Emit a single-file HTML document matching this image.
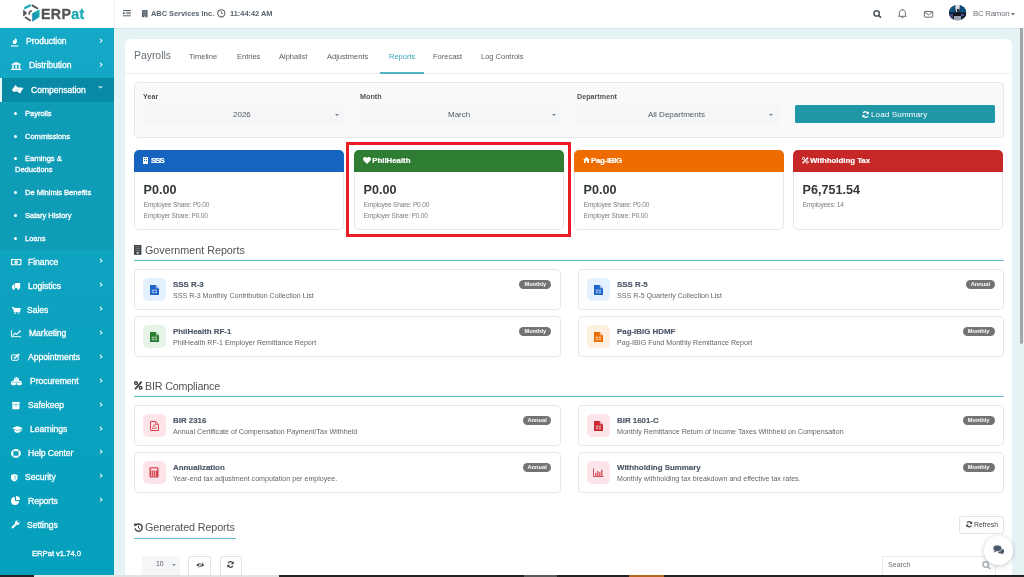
<!DOCTYPE html>
<html><head><meta charset="utf-8">
<style>
*{box-sizing:border-box;margin:0;padding:0}
html,body{width:1024px;height:577px;overflow:hidden;-webkit-font-smoothing:antialiased;font-family:"Liberation Sans",sans-serif;background:#e6f3f5;position:relative}
.a{position:absolute;white-space:nowrap}
svg{position:absolute;overflow:visible}
#hdr{left:0;top:0;width:1024px;height:28px;background:#fff;box-shadow:0 1px 0.5px #d6e6e9}
#side{left:0;top:28px;width:114px;height:549px;background:linear-gradient(#14a9c7 0,#0ea3c0 220px,#05a0bc 549px)}
.si{left:0;width:114px;height:24px;color:#fff;font-size:8.2px;font-weight:bold}
.si .t{position:absolute;top:7px;letter-spacing:0.1px}
.si .ar{position:absolute;left:99px;top:5px;font-size:9px;font-weight:normal}
.sb{color:#fff;font-size:7.3px;font-weight:bold;left:0}
.sb i{position:absolute;left:14px;top:3px;width:3px;height:3px;border-radius:50%;background:#fff}
.hd{color:#58626b;font-size:7.4px;font-weight:bold}
body>*{will-change:transform}
</style></head>
<body>
<div id="hdr" class="a"></div>
<div class="a" style="left:114px;top:0;width:1px;height:28px;background:#eef1f2"></div>
<!-- logo -->
<svg style="left:20px;top:2px" width="22" height="22" viewBox="0 0 22 22"><defs><linearGradient id="lg" x1="1" y1="0" x2="0" y2="1"><stop offset="0" stop-color="#17b5b0"/><stop offset="1" stop-color="#1a88ad"/></linearGradient></defs>
<path d="M5 6 L10 3.5" stroke="#18aeb3" stroke-width="2.3" stroke-linecap="round"/>
<path d="M12.6 3.6 L17.2 6.3" stroke="#505050" stroke-width="1.9" stroke-linecap="round"/>
<path d="M3.6 8.2 L6.6 11.1 L3.6 14 Z" fill="#505050" stroke="#505050" stroke-width="0.8" stroke-linejoin="round"/>
<path d="M9.3 12 C9 10.5 9.6 9.3 11.3 9" stroke="#505050" stroke-width="1.6" fill="none" stroke-linecap="round"/>
<path d="M5.6 15.5 L10 18.2" stroke="#505050" stroke-width="1.9" stroke-linecap="round"/>
<path d="M12.4 11.6 L18.8 7.9 Q19.2 7.7 19.2 8.2 L19.2 15 L12.4 19.3 Z" fill="url(#lg)" stroke="url(#lg)" stroke-width="0.6" stroke-linejoin="round"/>
</svg>
<div class="a" style="left:41px;top:6.6px;font-size:14.2px;line-height:1;font-weight:bold;color:#535353;letter-spacing:0.35px;-webkit-text-stroke:0.3px #535353">ERP<span style="color:#1ba8b3;-webkit-text-stroke:0.3px #1ba8b3">at</span></div>
<!-- header left -->
<svg style="left:123px;top:10px" width="7.9" height="6.3" viewBox="0 0 7.9 6.3"><rect x="0" y="0" width="7.9" height="1" fill="#5b6670"/><rect x="3.1" y="1.8" width="4.8" height="0.8" fill="#5b6670"/><rect x="3.1" y="3.3" width="4.8" height="0.8" fill="#5b6670"/><rect x="0" y="5.3" width="7.9" height="1" fill="#5b6670"/><path d="M0 1.8 L2.6 3.15 L0 4.5Z" fill="#5b6670"/></svg>
<svg style="left:142.4px;top:10px" width="5.6" height="7.3" viewBox="0 0 5.6 7.3"><rect x="0" y="0" width="5.6" height="7.3" rx="0.4" fill="#5b6670"/><rect x="0.9" y="1.2" width="3.8" height="0.5" fill="#fff" opacity="0.45"/><rect x="0.9" y="2.6" width="3.8" height="0.5" fill="#fff" opacity="0.45"/><rect x="0.9" y="4" width="3.8" height="0.5" fill="#fff" opacity="0.45"/><rect x="2.2" y="5.8" width="1.2" height="1.5" fill="#fff" opacity="0.7"/></svg>
<div class="a hd" style="left:151px;top:9px">ABC Services Inc.</div>
<svg style="left:217.3px;top:9.2px" width="8.6" height="8.6" viewBox="0 0 10 10"><circle cx="5" cy="5" r="4.2" stroke="#60666a" stroke-width="1.3" fill="none"/><path d="M5 2.5 V5.3 H6.8" stroke="#60666a" stroke-width="1.1" fill="none"/></svg>
<div class="a hd" style="left:230px;top:9px">11:44:42 AM</div>
<!-- header right -->
<svg style="left:873px;top:10px" width="9" height="8" viewBox="0 0 9 8"><circle cx="3.6" cy="3.4" r="2.7" stroke="#4f565b" stroke-width="1.5" fill="none"/><path d="M5.6 5.4 L8 7.6" stroke="#4f565b" stroke-width="1.7"/></svg>
<svg style="left:898.3px;top:9.2px" width="8.8" height="9" viewBox="0 0 8.8 9"><path d="M0.5 7.3 L1.4 6.2 L1.4 3.9 C1.4 2 2.7 0.9 4.4 0.9 C6.1 0.9 7.4 2 7.4 3.9 L7.4 6.2 L8.3 7.3 Z" stroke="#5a6064" stroke-width="0.9" fill="none" stroke-linejoin="round"/><path d="M3.4 7.9 C3.6 9 5.2 9 5.4 7.9" stroke="#5a6064" stroke-width="0.9" fill="none"/><path d="M4.4 0 V0.9" stroke="#5a6064" stroke-width="0.9"/></svg>
<svg style="left:923.8px;top:10.6px" width="9.2" height="6.6" viewBox="0 0 9.2 6.6"><rect x="0.45" y="0.45" width="8.3" height="5.7" rx="0.6" stroke="#5a6064" stroke-width="0.9" fill="none"/><path d="M0.8 1 L4.6 3.9 L8.4 1" stroke="#5a6064" stroke-width="0.9" fill="none"/></svg>
<svg style="left:949.2px;top:5.3px" width="17.3" height="15.5" viewBox="0 0 17.3 15.5"><defs><clipPath id="cc"><ellipse cx="8.65" cy="7.75" rx="8.65" ry="7.75"/></clipPath><filter id="bl" x="-20%" y="-20%" width="140%" height="140%"><feGaussianBlur stdDeviation="0.7"/></filter></defs><g clip-path="url(#cc)"><rect width="17.3" height="15.5" fill="#123a5c"/><g filter="url(#bl)"><rect x="0" y="0" width="6" height="8" fill="#0f5580"/><rect x="11" y="0" width="6.3" height="8" fill="#0e4f78"/><path d="M6 0 H11 L10 7 H7Z" fill="#d9dde2"/><rect x="8" y="4" width="2" height="3" fill="#2a2f3a"/><rect x="0" y="7.5" width="17.3" height="5" fill="#15171c"/><rect x="5" y="11" width="7" height="4.5" fill="#9aa2b0"/><rect x="1" y="9" width="3" height="3" fill="#3b4a8a"/><rect x="12" y="9" width="3" height="2" fill="#4a56a0"/><rect x="0" y="12.5" width="5" height="3" fill="#3a3f4a"/></g></g></svg>
<div class="a" style="left:972.8px;top:10px;font-size:7.8px;line-height:1;letter-spacing:-0.22px;color:#69727a">BC Ramon</div>
<svg style="left:1011.4px;top:13px" width="4" height="2.4" viewBox="0 0 5 3"><path d="M0 0 H5 L2.5 3 Z" fill="#6f7478"/></svg>
<div id="side" class="a"></div>
<div class="a" style="left:0;top:78px;width:114px;height:23.7px;background:#0889a6"></div>
<div class="a" style="left:0;top:78px;width:1.5px;height:24px;background:#e9f6f8"></div>
<div class="a" style="left:0;top:102px;width:114px;height:148px;background:#0f9cb7"></div>
<style>
.mi{position:absolute;color:#fff;font-size:8.6px;font-weight:normal;-webkit-text-stroke:0.3px #fff;line-height:10px;letter-spacing:-0.05px;white-space:nowrap;transform:translateY(0px)}
.ar{position:absolute;left:99.1px;width:3px;height:3px;border-right:1.1px solid #fff;border-top:1.1px solid #fff;transform:translateY(0.2px) rotate(45deg)}
.sm{position:absolute;color:#fff;font-size:7.6px;font-weight:normal;-webkit-text-stroke:0.3px #fff;line-height:10px;letter-spacing:-0.05px;white-space:nowrap;transform:translateY(0.8px)}
.dot{position:absolute;left:14px;width:3px;height:3px;border-radius:50%;background:#fff}
</style>
<!-- main items: top = center-5 -->
<div class="mi" style="left:26px;top:36px">Production</div><div class="ar" style="top:39px"></div>
<div class="mi" style="left:29px;top:60px">Distribution</div><div class="ar" style="top:63px"></div>
<div class="mi" style="left:31px;top:84.5px">Compensation</div><div class="ar" style="top:85px;left:99.2px;transform:rotate(135deg)"></div>
<div class="dot" style="top:111.5px"></div><div class="sm" style="left:25px;top:107.5px">Payrolls</div>
<div class="dot" style="top:134.5px"></div><div class="sm" style="left:24.5px;top:130.5px">Commissions</div>
<div class="dot" style="top:157px"></div><div class="sm" style="left:24.5px;top:153px">Earnings &amp;</div>
<div class="sm" style="left:14.5px;top:164px">Deductions</div>
<div class="dot" style="top:191px"></div><div class="sm" style="left:24.5px;top:187px">De Minimis Benefits</div>
<div class="dot" style="top:214px"></div><div class="sm" style="left:24.5px;top:210px">Salary History</div>
<div class="dot" style="top:237px"></div><div class="sm" style="left:24.5px;top:233px">Loans</div>
<div class="mi" style="left:28px;top:257px">Finance</div><div class="ar" style="top:259px"></div>
<div class="mi" style="left:28px;top:280.5px">Logistics</div><div class="ar" style="top:283px"></div>
<div class="mi" style="left:27px;top:304.5px">Sales</div><div class="ar" style="top:307px"></div>
<div class="mi" style="left:29px;top:328px">Marketing</div><div class="ar" style="top:331px"></div>
<div class="mi" style="left:28px;top:352px">Appointments</div><div class="ar" style="top:355px"></div>
<div class="mi" style="left:30px;top:376px">Procurement</div><div class="ar" style="top:379px"></div>
<div class="mi" style="left:28px;top:400px">Safekeep</div><div class="ar" style="top:403px"></div>
<div class="mi" style="left:30px;top:424px">Learnings</div><div class="ar" style="top:427px"></div>
<div class="mi" style="left:27.5px;top:447.5px">Help Center</div><div class="ar" style="top:450px"></div>
<div class="mi" style="left:25px;top:471.5px">Security</div><div class="ar" style="top:474px"></div>
<div class="mi" style="left:27.5px;top:495.5px">Reports</div><div class="ar" style="top:498px"></div>
<div class="mi" style="left:27px;top:519.5px">Settings</div>
<div class="mi" style="left:32px;top:549px;font-size:7.7px">ERPat v1.74.0</div>
<!-- sidebar icons -->
<svg style="left:10.8px;top:37.6px" width="7.5" height="8.5" viewBox="0 0 7.5 8.5"><path d="M4.6 0 C6.6 1.8 6.4 4.2 4.6 6 L2.4 6 C1.4 4.5 1.6 2.6 3 1.6 C3 2.6 3.4 3 3.8 3.2 C3.6 2 3.8 1 4.6 0Z" fill="#fff"/><rect x="0" y="7.4" width="7.3" height="1.1" fill="#fff"/></svg>
<svg style="left:10.8px;top:62px" width="10.4" height="8" viewBox="0 0 10.4 8"><path d="M0 2.2 L5.2 0 L10.4 2.2 Z" fill="#fff"/><rect x="0.6" y="2.2" width="9.2" height="0.8" fill="#fff"/><rect x="1.2" y="3.3" width="1.6" height="3.3" fill="#fff"/><rect x="4.4" y="3.3" width="1.6" height="3.3" fill="#fff"/><rect x="7.6" y="3.3" width="1.6" height="3.3" fill="#fff"/><rect x="0" y="6.8" width="10.4" height="1.2" fill="#fff"/></svg>
<svg style="left:12px;top:85px" width="11.4" height="8.6" viewBox="0 0 11.4 8.6"><path d="M0.2 5 L3.5 0.2 L5.6 2.5 L11.2 3.1 L7.9 8.4 L5.5 6.2 L1.3 6.6 Z" fill="#fff" stroke="#fff" stroke-width="0.4" stroke-linejoin="round"/><path d="M3.6 4.6 H7.2" stroke="#0a8aa5" stroke-width="0.5" opacity="0.6"/></svg>
<svg style="left:10.7px;top:259.4px" width="10.4" height="6.2" viewBox="0 0 10.4 6.2"><rect x="0" y="0" width="10.4" height="6.2" fill="#fff"/><rect x="1.1" y="1" width="8.2" height="4.2" rx="1.2" fill="#0aa0bc"/><circle cx="5.2" cy="3.1" r="1.9" fill="#fff"/><circle cx="5.2" cy="3.1" r="0.7" fill="#0aa0bc"/></svg>
<svg style="left:11.9px;top:283px" width="8.2" height="6.8" viewBox="0 0 8.2 6.8"><rect x="2.8" y="0" width="5.4" height="5" rx="0.5" fill="#fff"/><path d="M2.4 1.6 H1.2 L0 3.2 V5 H2.4Z" fill="#fff"/><circle cx="1.7" cy="5.6" r="1.2" fill="#fff"/><circle cx="6.3" cy="5.6" r="1.2" fill="#fff"/></svg>
<svg style="left:11.5px;top:307px" width="8.5" height="7" viewBox="0 0 8.5 7"><path d="M0 0.6 H1.6 L2.4 4.6 H7.4 L8.2 1.6 H2" stroke="#fff" stroke-width="1.2" fill="#fff" stroke-linejoin="round"/><circle cx="3" cy="6.2" r="0.8" fill="#fff"/><circle cx="6.8" cy="6.2" r="0.8" fill="#fff"/></svg>
<svg style="left:11px;top:330.3px" width="10.1" height="7.1" viewBox="0 0 10.1 7.1"><path d="M0.45 0 V6.65 H10.1" stroke="#fff" stroke-width="0.9" fill="none"/><path d="M1.6 5.6 L4 3.2 L5.8 4.4 L9.2 1" stroke="#fff" stroke-width="1.1" fill="none"/><path d="M7.6 0.6 H9.6 V2.6Z" fill="#fff"/></svg>
<svg style="left:11px;top:354px" width="9" height="6.8" viewBox="0 0 9 6.8"><rect x="0.5" y="0.9" width="6.6" height="5.4" rx="1" stroke="#fff" stroke-width="1" fill="none"/><path d="M3.2 4.4 L8.4 0" stroke="#fff" stroke-width="1.5"/><path d="M2.8 3.6 L2.6 4.8 L3.8 4.6Z" fill="#fff"/></svg>
<svg style="left:11px;top:377px" width="10.9" height="8.6" viewBox="0 0 10.9 8.6"><path d="M5.45 0 L8 1.2 V4 L5.45 5.2 L2.9 4 V1.2Z" fill="#fff"/><path d="M2.6 3.4 L5.2 4.6 V7.4 L2.6 8.6 L0 7.4 V4.6Z" fill="#fff"/><path d="M8.3 3.4 L10.9 4.6 V7.4 L8.3 8.6 L5.7 7.4 V4.6Z" fill="#fff"/><path d="M2.9 1.2 L5.45 2.4 L8 1.2 M0 4.6 L2.6 5.8 L5.2 4.6 M5.7 4.6 L8.3 5.8 L10.9 4.6" stroke="#0aa0bc" stroke-width="0.5" fill="none"/></svg>
<svg style="left:11.9px;top:402px" width="7.8" height="7.3" viewBox="0 0 7.8 7.3"><rect x="0" y="0" width="7.8" height="1.8" fill="#fff"/><rect x="0.4" y="2.3" width="7" height="5" fill="#fff"/><rect x="3" y="3.1" width="1.8" height="0.7" fill="#0aa0bc"/></svg>
<svg style="left:11.5px;top:426.1px" width="10.9" height="7" viewBox="0 0 10.9 7"><path d="M0 2.3 L5.45 0 L10.9 2.3 L5.45 4.6 Z" fill="#fff"/><path d="M2.3 3.6 V5.6 C3.8 7.3 7.1 7.3 8.6 5.6 V3.6 L5.45 4.9Z" fill="#fff"/><path d="M9.6 2.8 V5.5" stroke="#fff" stroke-width="0.6"/></svg>
<svg style="left:10.6px;top:449px" width="9.9" height="8.8" viewBox="0 0 9.9 8.8"><ellipse cx="4.95" cy="4.4" rx="3.8" ry="3.4" stroke="#fff" stroke-width="2.2" fill="none"/><path d="M1.8 1.4 L3.4 2.8 M8.1 1.4 L6.5 2.8 M1.8 7.4 L3.4 6 M8.1 7.4 L6.5 6" stroke="#0aa0bc" stroke-width="0.8"/></svg>
<svg style="left:11.3px;top:473.6px" width="6.6" height="7.6" viewBox="0 0 6.6 7.6"><path d="M0 0.9 L3.3 0 L6.6 0.9 V3.8 C6.6 5.8 5 7 3.3 7.6 C1.6 7 0 5.8 0 3.8Z" fill="#fff"/><path d="M3.3 1.2 V6.4 C4.4 6 5.4 5 5.4 3.8 V1.8Z" fill="#0aa0bc" opacity="0.35"/></svg>
<svg style="left:11px;top:496px" width="9" height="9" viewBox="0 0 9 9"><path d="M4 1 A4 4 0 1 0 8 5 H4Z" fill="#fff"/><path d="M5 0 A4 4 0 0 1 9 4 H5Z" fill="#fff"/></svg>
<svg style="left:10.5px;top:520px" width="9" height="9" viewBox="0 0 9 9"><path d="M1 8 L5 4" stroke="#fff" stroke-width="2"/><circle cx="6.3" cy="2.7" r="2.3" fill="#fff"/><circle cx="7.2" cy="1.8" r="1" fill="#0aa0bc"/></svg>
<style>
.tab{position:absolute;top:52px;font-size:7.5px;color:#5b6166;white-space:nowrap}
.lbl{position:absolute;top:93.3px;font-size:7.2px;line-height:1;font-weight:bold;color:#505458;white-space:nowrap}
.sel{position:absolute;top:105px;height:19.5px;background:#f5f6f8}
.stx{position:absolute;top:111.1px;font-size:8px;line-height:1;color:#55595d;white-space:nowrap}
.car{position:absolute;top:114px;width:0;height:0;border-left:2px solid transparent;border-right:2px solid transparent;border-top:2.5px solid #7a7f83}
.sel span{position:absolute;top:5.5px;font-size:7.6px;color:#55595d;white-space:nowrap}
.sel i{position:absolute;top:9px;width:0;height:0;border-left:2px solid transparent;border-right:2px solid transparent;border-top:2.5px solid #8a8f93}
.kc{position:absolute;top:149.5px;width:210px;height:80px;background:#fff;border:1px solid #e6e7e8;border-radius:5px}
.kh{position:absolute;left:-1px;top:-1px;right:-1px;height:22.2px;color:#fff;font-size:7.8px;font-weight:bold;border-radius:5px 5px 0 0}
.kh span{position:absolute;left:17px;top:7.3px;line-height:1;letter-spacing:0;white-space:nowrap;-webkit-text-stroke:0.2px #fff}
.kv{position:absolute;left:8.5px;top:32.8px;font-size:12.6px;line-height:1;font-weight:bold;color:#33373a;white-space:nowrap}
.ks{position:absolute;left:8.7px;font-size:6.6px;line-height:1;letter-spacing:-0.2px;color:#7b8085;white-space:nowrap}
</style>
<div class="a" id="card" style="left:125.3px;top:39.2px;width:887.3px;height:560px;background:#fff;border-radius:6px"></div>
<!-- tabs -->
<div class="a" style="left:133.6px;top:50.9px;font-size:10.4px;line-height:1;color:#66707a">Payrolls</div>
<div class="tab" style="left:189px">Timeline</div>
<div class="tab" style="left:237px">Entries</div>
<div class="tab" style="left:279px">Alphalist</div>
<div class="tab" style="left:327px">Adjustments</div>
<div class="tab" style="left:388.5px;color:#3aa7b6">Reports</div>
<div class="tab" style="left:433px">Forecast</div>
<div class="tab" style="left:480.5px">Log Controls</div>
<div class="a" style="left:125.3px;top:73.3px;width:887.3px;height:1px;background:#eceeef"></div>
<div class="a" style="left:379.8px;top:71.7px;width:43.7px;height:1.7px;background:#52b2c0"></div>
<!-- filter panel -->
<div class="a" style="left:133.5px;top:82px;width:870px;height:55.5px;background:#f9f9f9;border:1px solid #e6e7e8;border-radius:4px"></div>
<div class="lbl" style="left:143px">Year</div>
<div class="lbl" style="left:360px">Month</div>
<div class="lbl" style="left:577px">Department</div>
<div class="sel" style="left:142.5px;width:201.5px"></div><div class="sel" style="left:360px;width:200.5px"></div><div class="sel" style="left:577px;width:202px"></div>
<div class="stx" id="s1" style="left:232.8px">2026</div><div class="stx" id="s2" style="left:447.9px">March</div><div class="stx" id="s3" style="left:648px">All Departments</div>
<i class="car" style="left:335px"></i><i class="car" style="left:552px"></i><i class="car" style="left:769px"></i>
<div class="a" style="left:795px;top:105px;width:200px;height:18px;background:#1f97a7;border-radius:1.5px"></div>
<svg style="left:862px;top:110.8px" width="7.2" height="7.2" viewBox="0 0 10 10"><path d="M8.5 4 A3.7 3.7 0 0 0 1.6 3" stroke="#fff" stroke-width="1.8" fill="none"/><path d="M9.5 0.5 V4.5 H5.5Z" fill="#fff"/><path d="M1.5 6 A3.7 3.7 0 0 0 8.4 7" stroke="#fff" stroke-width="1.8" fill="none"/><path d="M0.5 9.5 V5.5 H4.5Z" fill="#fff"/></svg>
<div class="a" style="left:871px;top:110.6px;font-size:8.1px;line-height:1;letter-spacing:0.12px;color:#fff">Load Summary</div>
<!-- KPI cards -->
<div class="kc" style="left:134px"><div class="kh" style="background:#1565c0"><span style="letter-spacing:-1px">SSS</span></div><div class="kv">P0.00</div><div class="ks" style="top:51.3px">Employee Share: P0.00</div><div class="ks" style="top:61.5px">Employer Share: P0.00</div></div>
<div class="kc" style="left:354px"><div class="kh" style="background:#2e7d32"><span style="left:18.3px">PhilHealth</span></div><div class="kv">P0.00</div><div class="ks" style="top:51.3px">Employee Share: P0.00</div><div class="ks" style="top:61.5px">Employer Share: P0.00</div></div>
<div class="kc" style="left:574px"><div class="kh" style="background:#ef6c00"><span style="letter-spacing:-0.25px">Pag-IBIG</span></div><div class="kv">P0.00</div><div class="ks" style="top:51.3px">Employee Share: P0.00</div><div class="ks" style="top:61.5px">Employer Share: P0.00</div></div>
<div class="kc" style="left:793px"><div class="kh" style="background:#c62828"><span>Withholding Tax</span></div><div class="kv">P6,751.54</div><div class="ks" style="top:51.3px">Employees: 14</div></div>
<!-- card header icons -->
<svg style="left:143px;top:156.5px" width="5" height="7" viewBox="0 0 5 7"><rect width="5" height="7" fill="#fff"/><rect x="1" y="1" width="1" height="1" fill="#1565c0"/><rect x="3" y="1" width="1" height="1" fill="#1565c0"/><rect x="1" y="3" width="1" height="1" fill="#1565c0"/><rect x="3" y="3" width="1" height="1" fill="#1565c0"/></svg>
<svg style="left:362.5px;top:157px" width="8" height="7" viewBox="0 0 8 7"><path d="M4 7 L0.6 3.5 C-0.6 2 0.4 0 2 0 C3 0 3.6 0.6 4 1.2 C4.4 0.6 5 0 6 0 C7.6 0 8.6 2 7.4 3.5Z" fill="#fff"/></svg>
<svg style="left:582.5px;top:157px" width="7" height="6" viewBox="0 0 7 6"><path d="M0 3 L3.5 0 L7 3 H6 V6 H4.3 V4 H2.7 V6 H1 V3Z" fill="#fff"/></svg>
<svg style="left:802.2px;top:157.3px" width="6.8" height="6.6" viewBox="0 0 6.8 6.6"><circle cx="1.5" cy="1.5" r="1.1" stroke="#fff" stroke-width="1" fill="none"/><circle cx="5.3" cy="5.1" r="1.1" stroke="#fff" stroke-width="1" fill="none"/><path d="M6.2 0.4 L0.6 6.2" stroke="#fff" stroke-width="1.4"/></svg>
<!-- red highlight -->
<div class="a" style="left:345.5px;top:142px;width:225px;height:95.4px;border:3.5px solid #ec1c24"></div>
<style>
.sec{position:absolute;font-size:10.75px;line-height:1;color:#505458;white-space:nowrap}
.it{position:absolute;width:426.5px;height:41.3px;background:#fff;border:1px solid #e6e7e8;border-radius:4px}
.ib{position:absolute;left:8.3px;top:8.4px;width:22.5px;height:22.6px;border-radius:5px}
.itt{position:absolute;left:38px;top:10.6px;font-size:7.9px;line-height:1;font-weight:bold;color:#4b5767;-webkit-text-stroke:0.15px #4b5767;white-space:nowrap}
.itd{position:absolute;left:38px;top:23px;font-size:7.1px;line-height:1;color:#62676b;white-space:nowrap}
.bd{position:absolute;top:9.8px;height:9.2px;border-radius:5px;background:#737373;color:#fff;font-size:5.7px;font-weight:bold;line-height:9.2px;text-align:center}
</style>
<div class="it" style="left:133.8px;top:269.1px;width:426.5px"><div class="ib" style="background:#e3f0fd"><svg style="left:6.7px;top:6.4px" width="9" height="10" viewBox="0 0 9 10"><path d="M0 0 H5.8 L9 3.2 V10 H0Z" fill="#1e64c8"/><path d="M5.8 0 V3.2 H9" fill="#fff" opacity="0.55"/><rect x="1.8" y="4.6" width="5.2" height="3.6" fill="#fff" opacity="0.55"/><rect x="1.8" y="6.1" width="5.2" height="0.6" fill="#1e64c8"/><rect x="4" y="4.6" width="0.6" height="3.6" fill="#1e64c8"/></svg></div><div class="itt">SSS R-3</div><div class="itd">SSS R-3 Monthly Contribution Collection List</div><div class="bd" style="left:384.3px;width:32.0px">Monthly</div></div>
<div class="it" style="left:577.5px;top:269.1px;width:425.8px"><div class="ib" style="background:#e3f0fd"><svg style="left:6.7px;top:6.4px" width="9" height="10" viewBox="0 0 9 10"><path d="M0 0 H5.8 L9 3.2 V10 H0Z" fill="#1e64c8"/><path d="M5.8 0 V3.2 H9" fill="#fff" opacity="0.55"/><rect x="1.8" y="4.6" width="5.2" height="3.6" fill="#fff" opacity="0.55"/><rect x="1.8" y="6.1" width="5.2" height="0.6" fill="#1e64c8"/><rect x="4" y="4.6" width="0.6" height="3.6" fill="#1e64c8"/></svg></div><div class="itt">SSS R-5</div><div class="itd">SSS R-5 Quarterly Collection List</div><div class="bd" style="left:387.1px;width:28.6px">Annual</div></div>
<div class="it" style="left:133.8px;top:316.4px;width:426.5px"><div class="ib" style="background:#e6f4e7"><svg style="left:6.7px;top:6.4px" width="9" height="10" viewBox="0 0 9 10"><path d="M0 0 H5.8 L9 3.2 V10 H0Z" fill="#2a7d31"/><path d="M5.8 0 V3.2 H9" fill="#fff" opacity="0.55"/><rect x="1.8" y="4.6" width="5.2" height="3.6" fill="#fff" opacity="0.55"/><rect x="1.8" y="6.1" width="5.2" height="0.6" fill="#2a7d31"/><rect x="4" y="4.6" width="0.6" height="3.6" fill="#2a7d31"/></svg></div><div class="itt">PhilHealth RF-1</div><div class="itd">PhilHealth RF-1 Employer Remittance Report</div><div class="bd" style="left:384.3px;width:32.0px">Monthly</div></div>
<div class="it" style="left:577.5px;top:316.4px;width:425.8px"><div class="ib" style="background:#fdf0e0"><svg style="left:6.7px;top:6.4px" width="9" height="10" viewBox="0 0 9 10"><path d="M0 0 H5.8 L9 3.2 V10 H0Z" fill="#ef6c00"/><path d="M5.8 0 V3.2 H9" fill="#fff" opacity="0.55"/><rect x="1.8" y="4.6" width="5.2" height="3.6" fill="#fff" opacity="0.55"/><rect x="1.8" y="6.1" width="5.2" height="0.6" fill="#ef6c00"/><rect x="4" y="4.6" width="0.6" height="3.6" fill="#ef6c00"/></svg></div><div class="itt">Pag-IBIG HDMF</div><div class="itd">Pag-IBIG Fund Monthly Remittance Report</div><div class="bd" style="left:383.6px;width:32.0px">Monthly</div></div>
<div class="it" style="left:133.8px;top:405.1px;width:426.5px"><div class="ib" style="background:#fde4e8"><svg style="left:6.7px;top:6.4px" width="9" height="10" viewBox="0 0 9 10"><path d="M0.5 0.5 H5.6 L8.5 3.4 V9.5 H0.5Z" fill="none" stroke="#d9464f" stroke-width="1"/><path d="M5.4 0.6 V3.6 H8.4" fill="none" stroke="#d9464f" stroke-width="0.8"/><path d="M2.2 8 C3.2 6 4 4.4 4 3.6 C4.2 4.8 5 6.2 6.6 7.2 C5.2 7 3.6 7.4 2.2 8Z" fill="none" stroke="#d9464f" stroke-width="0.7"/></svg></div><div class="itt">BIR 2316</div><div class="itd">Annual Certificate of Compensation Payment/Tax Withheld</div><div class="bd" style="left:387.8px;width:28.6px">Annual</div></div>
<div class="it" style="left:577.5px;top:405.1px;width:425.8px"><div class="ib" style="background:#fde4e8"><svg style="left:6.7px;top:6.4px" width="9" height="10" viewBox="0 0 9 10"><path d="M0 0 H5.8 L9 3.2 V10 H0Z" fill="#c8282f"/><path d="M5.8 0 V3.2 H9" fill="#fff" opacity="0.55"/><rect x="1.8" y="4.6" width="5.2" height="3.6" fill="#fff" opacity="0.55"/><rect x="1.8" y="6.1" width="5.2" height="0.6" fill="#c8282f"/><rect x="4" y="4.6" width="0.6" height="3.6" fill="#c8282f"/></svg></div><div class="itt">BIR 1601-C</div><div class="itd">Monthly Remittance Return of Income Taxes Withheld on Compensation</div><div class="bd" style="left:383.6px;width:32.0px">Monthly</div></div>
<div class="it" style="left:133.8px;top:452.2px;width:426.5px"><div class="ib" style="background:#fde4e8"><svg style="left:6px;top:6px" width="10" height="10.5" viewBox="0 0 10 10.5"><rect x="0.5" y="0.2" width="9" height="10.2" rx="1" fill="#d23f4a"/><rect x="1.7" y="1.4" width="6.6" height="2.2" fill="#fde4e8"/><rect x="1.9" y="4.4" width="1.2" height="1.2" fill="#fde4e8"/><rect x="1.9" y="6.300000000000001" width="1.2" height="1.2" fill="#fde4e8"/><rect x="1.9" y="8.2" width="1.2" height="1.2" fill="#fde4e8"/><rect x="3.9" y="4.4" width="1.2" height="1.2" fill="#fde4e8"/><rect x="3.9" y="6.300000000000001" width="1.2" height="1.2" fill="#fde4e8"/><rect x="3.9" y="8.2" width="1.2" height="1.2" fill="#fde4e8"/><rect x="5.9" y="4.4" width="1.2" height="1.2" fill="#fde4e8"/><rect x="5.9" y="6.300000000000001" width="1.2" height="1.2" fill="#fde4e8"/><rect x="5.9" y="8.2" width="1.2" height="1.2" fill="#fde4e8"/></svg></div><div class="itt">Annualization</div><div class="itd">Year-end tax adjustment computation per employee.</div><div class="bd" style="left:387.8px;width:28.6px">Annual</div></div>
<div class="it" style="left:577.5px;top:452.2px;width:425.8px"><div class="ib" style="background:#fde4e8"><svg style="left:6px;top:7px" width="11" height="9" viewBox="0 0 11 9"><path d="M0.5 0.5 V8.5 H10.5" stroke="#d23f4a" stroke-width="0.9" fill="none"/><rect x="2.2" y="5" width="1.2" height="3" fill="#d23f4a"/><rect x="4.2" y="3" width="1.2" height="5" fill="#d23f4a"/><rect x="6.2" y="4.2" width="1.2" height="3.8" fill="#d23f4a"/><rect x="8.2" y="1.8" width="1.2" height="6.2" fill="#d23f4a"/></svg></div><div class="itt">Withholding Summary</div><div class="itd">Monthly withholding tax breakdown and effective tax rates.</div><div class="bd" style="left:383.6px;width:32.0px">Monthly</div></div>
<!-- Government Reports -->
<svg style="left:134px;top:245.2px" width="7.4" height="9.8" viewBox="0 0 7.4 9.8"><rect width="7.4" height="9.8" fill="#3d4246"/><rect x="1.3" y="1.3" width="4.8" height="1" fill="#7a7f83"/><rect x="1.3" y="3.2" width="4.8" height="1" fill="#7a7f83"/><rect x="1.3" y="5.1" width="4.8" height="1" fill="#7a7f83"/><rect x="2.4" y="7.3" width="2.6" height="1.3" rx="0.6" fill="#fff"/></svg>
<div class="sec" style="left:145.3px;top:244.9px">Government Reports</div>
<div class="a" style="left:133.8px;top:259.9px;width:870px;height:1.1px;background:#62bcc8"></div>
<!-- BIR Compliance -->
<svg style="left:133.7px;top:381.3px" width="8.6" height="8.8" viewBox="0 0 8.6 8.8"><circle cx="2" cy="2.1" r="1.4" stroke="#35393c" stroke-width="1.3" fill="none"/><circle cx="6.6" cy="6.7" r="1.4" stroke="#35393c" stroke-width="1.3" fill="none"/><path d="M7.6 0.6 L1 8.2" stroke="#35393c" stroke-width="1.7"/></svg>
<div class="sec" style="left:145.4px;top:381px;letter-spacing:-0.19px">BIR Compliance</div>
<div class="a" style="left:133.8px;top:395.5px;width:870px;height:1.1px;background:#62bcc8"></div>
<!-- Generated Reports -->
<svg style="left:133.5px;top:522.5px" width="9" height="9" viewBox="0 0 10 10"><path d="M2 2.5 A4 4 0 1 1 1.2 6" stroke="#3a3f43" stroke-width="1.6" fill="none"/><path d="M0 0.5 L4 0.8 L0.6 4.2Z" fill="#3a3f43"/><path d="M5 3 V5.3 L6.5 6.5" stroke="#3a3f43" stroke-width="1.1" fill="none"/></svg>
<div class="sec" style="left:145.3px;top:522.2px;letter-spacing:-0.1px">Generated Reports</div>
<div class="a" style="left:133.6px;top:537.9px;width:101.6px;height:1.1px;background:#62bcc8"></div>
<div class="a" style="left:959px;top:516px;width:44.5px;height:17.5px;border:1px solid #e2e5e7;border-radius:2px;background:#fff"></div>
<svg style="left:965.5px;top:521px" width="6.5" height="6.5" viewBox="0 0 10 10"><path d="M8.5 4 A3.7 3.7 0 0 0 1.6 3" stroke="#3f4448" stroke-width="1.8" fill="none"/><path d="M9.5 0.5 V4.5 H5.5Z" fill="#3f4448"/><path d="M1.5 6 A3.7 3.7 0 0 0 8.4 7" stroke="#3f4448" stroke-width="1.8" fill="none"/><path d="M0.5 9.5 V5.5 H4.5Z" fill="#3f4448"/></svg>
<div class="a" style="left:973.5px;top:520.5px;font-size:6.9px;color:#3f4448">Refresh</div>
<!-- controls -->
<div class="a" style="left:142.3px;top:555.6px;width:37.5px;height:22px;background:#f5f6f8"></div>
<div class="a" style="left:155.5px;top:560px;font-size:6.8px;color:#55595d">10</div>
<div class="a" style="left:172px;top:564px;width:0;height:0;border-left:2px solid transparent;border-right:2px solid transparent;border-top:2.5px solid #8a8f93"></div>
<div class="a" style="left:188px;top:555.5px;width:23px;height:22px;border:1px solid #e2e5e7;border-radius:2px"></div>
<svg style="left:195.6px;top:562.2px" width="8.6" height="6" viewBox="0 0 8.6 6"><path d="M0.4 3 C1.8 0.6 6.8 0.6 8.2 3 C6.8 5.4 1.8 5.4 0.4 3Z" fill="#3f4448"/><circle cx="4.3" cy="3" r="1.5" fill="#fff"/><circle cx="4.3" cy="3" r="0.8" fill="#3f4448"/><path d="M2.2 5.8 L6.4 0.2" stroke="#fff" stroke-width="1.1"/><path d="M2.6 5.9 L6.8 0.3" stroke="#3f4448" stroke-width="0.6"/></svg>
<div class="a" style="left:219.5px;top:555.5px;width:22px;height:22px;border:1px solid #e2e5e7;border-radius:2px"></div>
<svg style="left:226.5px;top:561px" width="7" height="7" viewBox="0 0 10 10"><path d="M8.5 4 A3.7 3.7 0 0 0 1.6 3" stroke="#3f4448" stroke-width="1.8" fill="none"/><path d="M9.5 0.5 V4.5 H5.5Z" fill="#3f4448"/><path d="M1.5 6 A3.7 3.7 0 0 0 8.4 7" stroke="#3f4448" stroke-width="1.8" fill="none"/><path d="M0.5 9.5 V5.5 H4.5Z" fill="#3f4448"/></svg>
<div class="a" style="left:882px;top:555.5px;width:114px;height:24px;border:1px solid #e8eaf0;border-radius:2px;background:#fff"></div>
<div class="a" style="left:888.2px;top:562px;font-size:7.1px;line-height:1;color:#6c7175">Search</div>
<svg style="left:981.8px;top:561.2px" width="8.8" height="8" viewBox="0 0 9 8.2"><circle cx="3.8" cy="3.6" r="2.8" stroke="#a6b2b8" stroke-width="1.5" fill="none"/><path d="M5.8 5.6 L8.4 8" stroke="#a6b2b8" stroke-width="1.7"/></svg>
<!-- chat bubble -->
<div class="a" style="left:984px;top:535.5px;width:28.5px;height:28.5px;border-radius:50%;background:#fff;box-shadow:0 1px 5px rgba(0,0,0,0.22)"></div>
<svg style="left:992.5px;top:545px" width="11.5" height="9.5" viewBox="0 0 11.5 9.5"><ellipse cx="8" cy="6.2" rx="3.1" ry="2.4" fill="#4a5a68"/><path d="M9.6 7.6 L10.6 9.3 L8.2 8.4Z" fill="#4a5a68"/><ellipse cx="4.4" cy="3.3" rx="4.4" ry="3.2" fill="#4a5a68" stroke="#fff" stroke-width="0.7"/><path d="M1.6 5.6 L1 7.6 L3.6 6.3Z" fill="#4a5a68"/></svg>
<!-- scrollbars -->
<div class="a" style="left:1019.8px;top:28px;width:2.8px;height:316px;background:#a4a5a6;border-radius:0 0 1.4px 1.4px"></div>
<div class="a" style="left:0;top:575px;width:1024px;height:2px;background:#222"></div>
<div class="a" style="left:34px;top:575px;width:245px;height:2px;background:#e2e2e2"></div>
<div class="a" style="left:524px;top:575px;width:33px;height:2px;background:#5a5a5a"></div>
<div class="a" style="left:628.5px;top:575px;width:34.5px;height:2px;background:#b8651f"></div>
</body></html>
